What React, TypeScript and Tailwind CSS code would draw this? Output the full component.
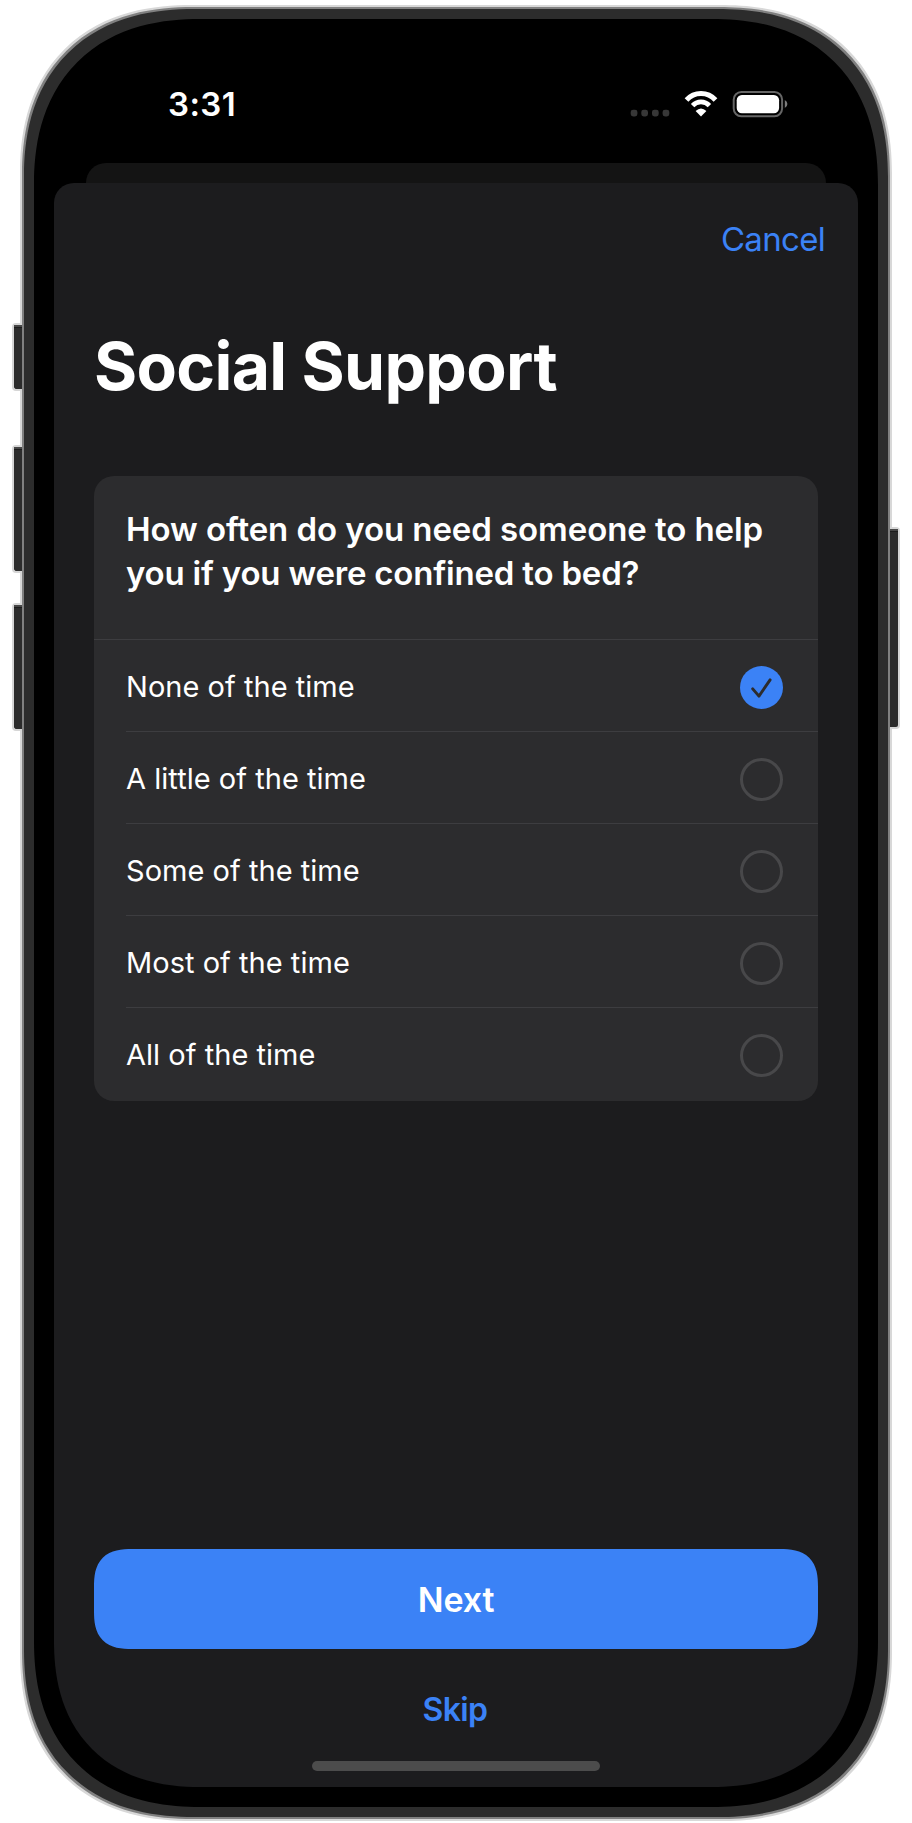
import { useState } from "react";

const options = [
  "None of the time",
  "A little of the time",
  "Some of the time",
  "Most of the time",
  "All of the time",
];

function StatusIcons() {
  return (
    <svg className="mt-[3px] h-8 w-40" viewBox="630 88 160 32" fill="none">
      {[630.7, 641.3, 652, 662.6].map((x) => (
        <rect key={x} x={x} y="109.7" width="6.7" height="6.7" rx="2.4" fill="#373737" />
      ))}
      <path d="M686.5 100A19.5 19.5 0 0 1 715.5 100" stroke="#fff" strokeWidth="5" />
      <path d="M692.6 105.6A11.3 11.3 0 0 1 709.4 105.6" stroke="#fff" strokeWidth="4.6" />
      <path d="M701 116.4L695.6 110.9Q701 105.9 706.4 110.9Z" fill="#fff" />
      <rect x="733.7" y="92" width="48.4" height="24.2" rx="7.6" stroke="#666" strokeWidth="2" />
      <rect x="736.7" y="95" width="42.4" height="18.2" rx="5.2" fill="#fff" />
      <path d="M784.8 100V108Q787.4 106.7 787.4 104T784.8 100Z" fill="#7c7c7c" />
    </svg>
  );
}

function SelectedMark() {
  return (
    <svg className="size-[43px]" viewBox="0 0 44 44" fill="none">
      <circle cx="22" cy="22" r="22" fill="#3b82f6" />
      <path
        d="M13 23.4L19.4 30.8L30.8 14.2"
        stroke="#2c2c2e"
        strokeWidth="3"
        strokeLinecap="round"
        strokeLinejoin="round"
      />
    </svg>
  );
}

function SideKey({ className }: { className: string }) {
  return (
    <div className={`absolute border-[#d6d6d6] bg-[#2c2c2c] ${className}`}>
      <div className="h-[2px] bg-[#474747]" />
      <div className="h-px bg-[#1c1c1c]" />
    </div>
  );
}

export default function App() {
  const [selected, setSelected] = useState(0);

  return (
    <div className="flex h-[1823px] w-[912px] justify-center bg-white pt-[19px] font-['Inter',sans-serif] text-white">
      <div className="relative flex h-[1788px] w-[844px] flex-col rounded-[166px] bg-black px-5 pb-5 shadow-[0_0_0_10px_#2c2c2c,0_0_0_12px_#808080,0_0_0_14px_#d8d8d8] [corner-shape:superellipse(1.2)]">
        <SideKey className="top-[304px] -left-[22px] h-[68px] w-[10px] rounded-l-[4px] border-y-2 border-l-2" />
        <SideKey className="top-[426px] -left-[22px] h-[128px] w-[10px] rounded-l-[4px] border-y-2 border-l-2" />
        <SideKey className="top-[584px] -left-[22px] h-[128px] w-[10px] rounded-l-[4px] border-y-2 border-l-2" />
        <SideKey className="top-[508px] -right-[22px] h-[202px] w-[10px] rounded-r-[4px] border-y-2 border-r-2" />

        <header className="flex h-[144px] items-start justify-between pt-[66px] pr-[68px] pl-[114px]">
          <span className="-mt-px text-[33px] leading-10 font-semibold tracking-[0.4px]">3:31</span>
          <StatusIcons />
        </header>

        <div className="mx-8 h-5 rounded-t-[20px] bg-[#141414]" />

        <main className="flex flex-1 flex-col rounded-t-[20px] rounded-b-[146px] bg-[#1c1c1e] px-10 [corner-shape:round_round_superellipse(1.2)_superellipse(1.2)]">
          <div className="-mr-[7px] flex h-28 items-center justify-end">
            <button className="text-[33px] leading-10 tracking-[-0.7px] text-[#3b82f6]">Cancel</button>
          </div>
          <h1 className="mt-[31px] text-[66px] leading-20 font-bold tracking-[-0.68px]">Social Support</h1>

          <section className="mt-[70px] overflow-hidden rounded-[20px] bg-[#2c2c2e]">
            <h2 className="h-[164px] border-b border-[#3d3d40] pt-[31px] pl-8 text-[33px] leading-[44px] font-semibold">
              <span className="block tracking-[-0.08px]">How often do you need someone to help</span>
              <span className="block tracking-[-0.2px]">you if you were confined to bed?</span>
            </h2>
            <ul className="pl-8">
              {options.map((label, i) => (
                <li
                  key={label}
                  onClick={() => setSelected(i)}
                  className="flex h-[92px] items-center justify-between border-b border-[#3d3d40] pt-1 pr-[35px] last:h-[93px] last:border-0 last:pb-0.5"
                >
                  <span className="-mt-px text-[29px] leading-9 tracking-[0.03px]">{label}</span>
                  {i === selected ? (
                    <SelectedMark />
                  ) : (
                    <span className="size-[43px] rounded-full border-3 border-[#48484a]" />
                  )}
                </li>
              ))}
            </ul>
          </section>

          <div className="mt-auto flex flex-col items-center pb-4">
            <button className="h-[100px] w-full rounded-[38px] bg-[#3b82f6] text-[34px] font-semibold tracking-[-0.13px] [corner-shape:superellipse(1.4)]">
              Next
            </button>
            <button className="mt-[41px] -ml-[2px] text-[32px] leading-10 font-semibold tracking-[-0.6px] text-[#3b82f6]">
              Skip
            </button>
            <div className="mt-[31px] h-[10px] w-72 rounded-full bg-[#4c4c4c]" />
          </div>
        </main>
      </div>
    </div>
  );
}
